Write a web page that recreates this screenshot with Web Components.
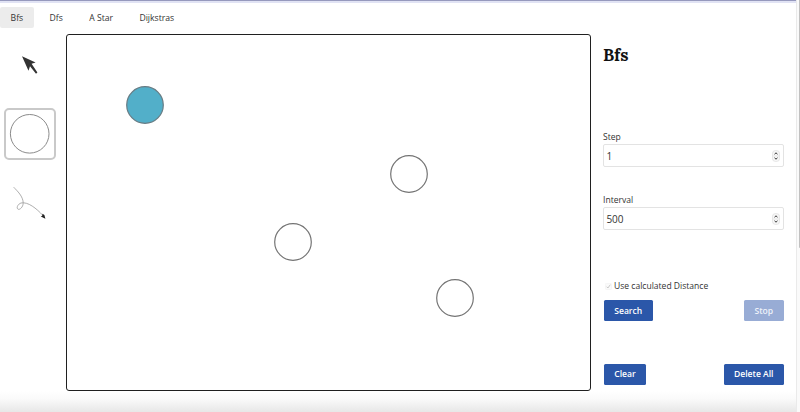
<!DOCTYPE html>
<html lang="en">
<head>
<meta charset="utf-8">
<title>Graph search</title>
<style>
  html, body { margin: 0; height: 100%; overflow: hidden; background: #fff; }
  body { font-family: "Open Sans", "Noto Sans", sans-serif; font-size: 8.55px; color: #333; }
</style>
</head>
<body>
<graph-app></graph-app>
<script>
function define(name, html) {
  const template = document.createElement('template');
  template.innerHTML = html;
  customElements.define(name, class extends HTMLElement {
    constructor() {
      super();
      this.attachShadow({ mode: 'open' }).append(template.content.cloneNode(true));
    }
  });
}

define('nav-tab', `
  <style>
    :host { display: flex; align-items: center; height: 21px; padding: 0 10.6px; border-radius: 2px; box-sizing: border-box; line-height: 12px; white-space: nowrap; }
    :host([active]) { background: #ececec; }
  </style><slot></slot>`);

define('tab-bar', `
  <style>:host { display: flex; gap: 5.2px; height: 21px; padding-top: 4px; font-size: 8.65px; }</style><slot></slot>`);

define('tool-button', `
  <style>
    :host { display: flex; align-items: center; justify-content: center; width: 52px; height: 52px; box-sizing: border-box; border: 2px solid transparent; border-radius: 5px; }
    :host([selected]) { border-color: #c9c9c9; }
  </style><slot></slot>`);

define('tool-palette', `
  <style>
    :host { display: flex; flex-direction: column; gap: 17px; width: 62px; padding: 5px 0 0 4px; box-sizing: border-box; }
    svg { display: block; width: 48px; height: 48px; flex: none; }
  </style>
  <tool-button>
    <svg viewBox="6 41 48 48">
      <path d="M22 56.2 L35.6 62.4 L31.6 63.8 L37.4 72.4 L36 73.7 L30 66.2 L28.5 70.8 Z" fill="#333"/>
    </svg>
  </tool-button>
  <tool-button selected>
    <svg viewBox="0 0 48 48"><circle cx="23.7" cy="23.8" r="19.3" fill="#fff" stroke="#8b8b8b" stroke-width="1"/></svg>
  </tool-button>
  <tool-button>
    <svg viewBox="6 179 48 48">
      <path d="M13.7 187.2 C17 190.7 23.4 196.5 23.2 203.3 C23 207 20 209.8 18.3 209.3 C16 208.4 17.5 204.2 21 203 C28 201.5 36.5 208.5 43 215.5" fill="none" stroke="#999" stroke-width=".8"/>
      <path d="M45.4 218.8 L40.8 216.4 L42.2 215.7 L42.5 213.8 L44.4 215 Z" fill="#222"/>
    </svg>
  </tool-button>`);

define('graph-node', `
  <style>
    :host { display: block; position: absolute; width: 38px; height: 38px; margin: -19px 0 0 -19px; }
    svg { display: block; width: 38px; height: 38px; overflow: visible; }
    circle { fill: #fff; stroke: #747474; stroke-width: 1.2; }
    :host([visited]) circle { fill: #52afc9; stroke: #687c84; }
  </style>
  <svg viewBox="0 0 38 38"><circle cx="19" cy="19" r="18.3"/></svg>`);

define('graph-canvas', `
  <style>:host { display: block; position: relative; width: 525px; height: 357px; box-sizing: border-box; border: 1px solid #202020; border-radius: 3px; background: #fff; }</style>
  <slot></slot>`);

define('number-field', `
  <style>
    :host { display: flex; flex-direction: column; }
    label { line-height: 13px; }
    .box { display: flex; align-items: center; justify-content: space-between; height: 23px; box-sizing: border-box; border: 1px solid #e3e3e3; border-radius: 2px; padding: 0 3px 0 2.5px; font-size: 10px; line-height: 14px; color: #333; }
    .box span { letter-spacing: -.1px; }
    svg { display: block; width: 8px; height: 12px; }
  </style>
  <label><slot name="label"></slot></label>
  <div class="box"><span><slot></slot></span>
    <svg viewBox="0 0 8 12">
      <rect x=".4" y=".5" width="7.2" height="11" rx="3.2" fill="#f7f7f7" stroke="#dedede" stroke-width=".7"/>
      <path d="M.5 6H7.5" stroke="#ddd" stroke-width=".6"/>
      <path d="M2.5 4.2L4 2.8L5.5 4.2M2.5 7.8L4 9.2L5.5 7.8" fill="none" stroke="#333" stroke-width="1"/>
    </svg>
  </div>`);

define('check-option', `
  <style>
    :host { display: flex; align-items: center; gap: 2px; height: 13px; line-height: 13px; padding-left: 2px; }
    svg { width: 7px; height: 7px; }
  </style>
  <svg viewBox="0 0 7 7"><rect x=".4" y=".4" width="6.2" height="6.2" rx="1" fill="#fafafa" stroke="#eee" stroke-width=".5"/><path d="M1.6 3.7L2.9 5L5.3 1.7" fill="none" stroke="#bcbcbc" stroke-width=".8"/></svg>
  <span><slot></slot></span>`);

define('action-button', `
  <style>
    :host { display: flex; align-items: center; justify-content: center; height: 21px; box-sizing: border-box; border-radius: 1.5px; background: #2b57a9; color: #fff; font-weight: 600; line-height: 12px; white-space: nowrap; }
    :host([disabled]) { background: #98acd5; color: #eef2fa; }
  </style><slot></slot>`);

define('control-panel', `
  <style>
    :host { display: flex; flex-direction: column; width: 181px; }
    h1 { margin: 10px 0 0; font: bold 17px/22px "Lora", "Liberation Serif", serif; color: #111; }
    .step { margin-top: 65px; }
    .interval { margin-top: 27px; }
    check-option { margin-top: 50px; }
    .row { display: flex; justify-content: space-between; padding: 0 .5px 0 1px; margin-top: 7px; }
    .row + .row { margin-top: 42.5px; }
    #search { width: 48.5px; } #stop { width: 39.5px; } #clear { width: 42px; } #delete { width: 59.5px; }
  </style>
  <h1>Bfs</h1>
  <number-field class="step"><span slot="label">Step</span>1</number-field>
  <number-field class="interval"><span slot="label">Interval</span>500</number-field>
  <check-option>Use calculated Distance</check-option>
  <div class="row"><action-button id="search">Search</action-button><action-button id="stop" disabled>Stop</action-button></div>
  <div class="row"><action-button id="clear">Clear</action-button><action-button id="delete">Delete All</action-button></div>`);

define('page-scroll', `
  <style>
    :host { display: block; position: absolute; top: 0; right: 0; width: 4px; height: 100%; box-sizing: border-box; border-left: 1px solid #eaeaea; background: #fafafa; }
    div { margin-left: 1.5px; width: 2px; height: 248px; background: #c1c1c1; border-radius: 0 0 0 1px; }
  </style><div></div>`);

define('graph-app', `
  <style>
    :host { display: flex; flex-direction: column; position: relative; height: 412px; box-sizing: border-box; overflow: hidden; background: linear-gradient(#fff 0 391px, #fafafa 399px, #e7e7e7 412px); }
    .top { height: 3px; flex: none; background: linear-gradient(#9699bd 0 1px, #e1e3f4 1px 3px); }
    main { display: flex; align-items: flex-start; padding: 6px 0 0; }
    graph-canvas { margin-left: 4px; }
    control-panel { margin-left: 12px; }
  </style>
  <div class="top"></div>
  <tab-bar><nav-tab active>Bfs</nav-tab><nav-tab>Dfs</nav-tab><nav-tab>A Star</nav-tab><nav-tab>Dijkstras</nav-tab></tab-bar>
  <main>
    <tool-palette></tool-palette>
    <graph-canvas>
      <graph-node visited style="left:78px;top:70px"></graph-node>
      <graph-node style="left:342px;top:139px"></graph-node>
      <graph-node style="left:226px;top:207px"></graph-node>
      <graph-node style="left:388px;top:263px"></graph-node>
    </graph-canvas>
    <control-panel></control-panel>
  </main>
  <page-scroll></page-scroll>`);
</script>
</body>
</html>
